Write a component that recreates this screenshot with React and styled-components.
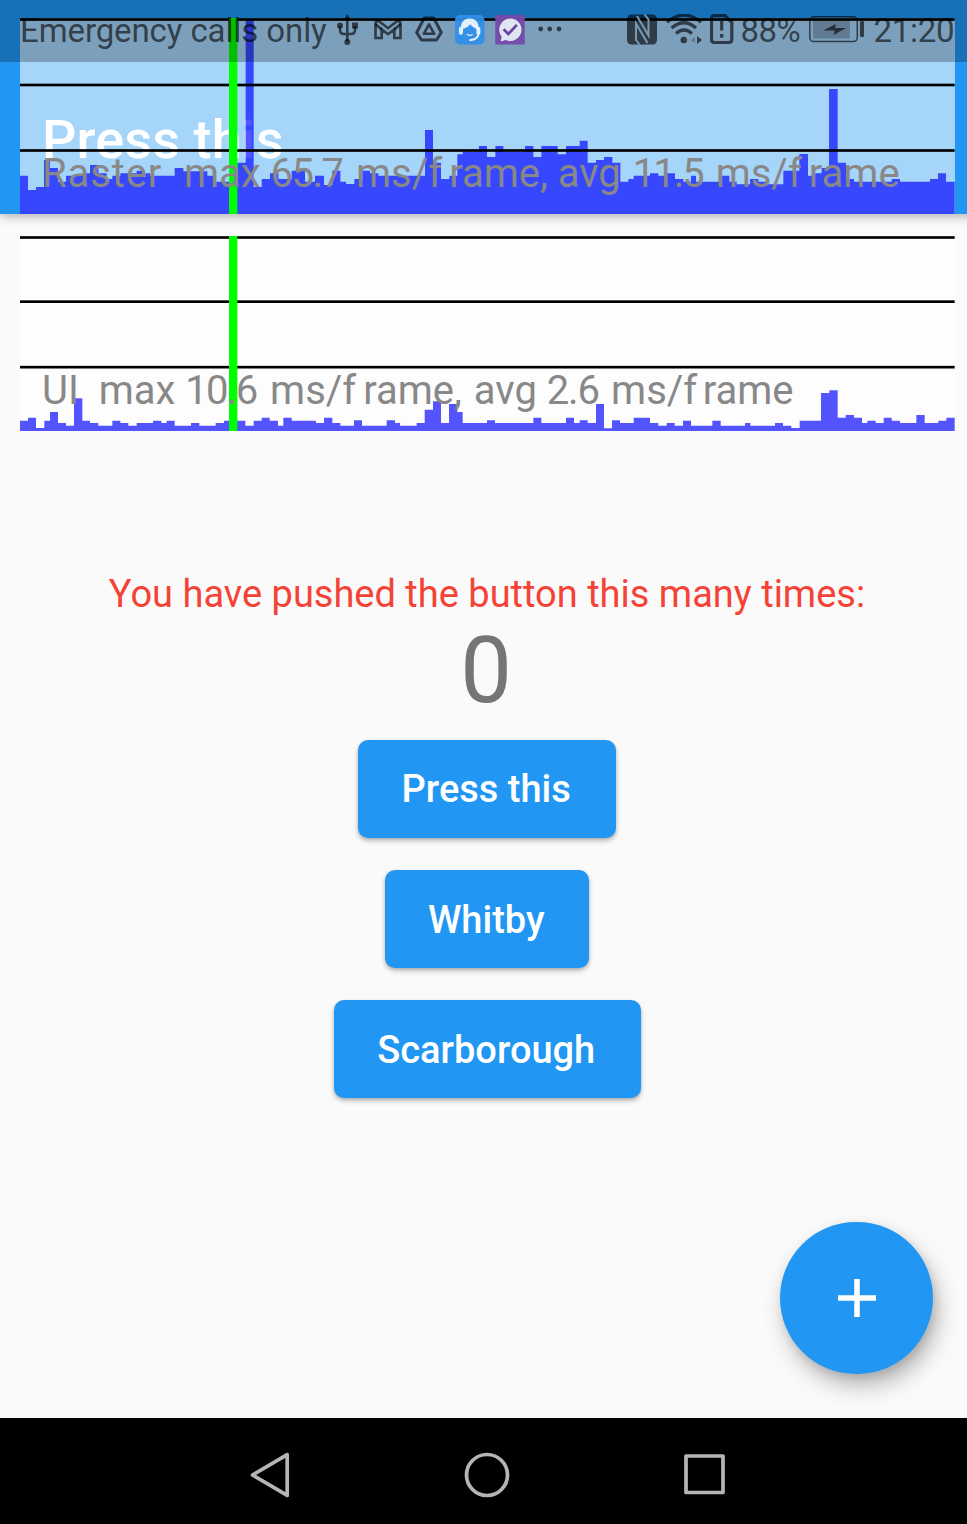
import React from "react";
import styled, { createGlobalStyle } from "styled-components";

const Global = createGlobalStyle`
  *, *::before, *::after { box-sizing: border-box; }
  html, body { margin: 0; padding: 0; background: #fafafa; }
  body { font-family: Roboto, "Liberation Sans", sans-serif; }
`;

const Viewport = styled.div`
  position: relative;
  width: 967px;
  height: 1524px;
  overflow: hidden;
`;

const Screen = styled.div`
  display: flex;
  flex-direction: column;
  width: 974px;
  height: 1524px;
  background: #fafafa;
`;

const AppBar = styled.header`
  flex: none;
  height: 214px;
  padding: 108px 43px 0 42px;
  background: #2196f3;
  box-shadow: 0 2px 10px rgba(0, 0, 0, 0.32);
`;

const Title = styled.h1`
  margin: 0;
  font-size: 54px;
  line-height: 64px;
  font-weight: 500;
  letter-spacing: 0.1px;
  color: #fff;
`;

const Main = styled.main`
  flex: 1;
  display: flex;
  flex-direction: column;
  align-items: center;
  padding-top: 357px;
`;

const Message = styled.p`
  margin: 0;
  font-size: 38px;
  line-height: 46px;
  letter-spacing: 0;
  color: #f44336;
  white-space: nowrap;
`;

const Count = styled.div`
  margin-right: 2px;
  font-size: 92px;
  line-height: 108px;
  color: #757575;
`;

const Buttons = styled.div`
  display: flex;
  flex-direction: column;
  align-items: center;
  gap: 32.3px;
  margin-top: 14.7px;
`;

const RaisedButton = styled.button`
  width: ${(p) => p.$width}px;
  height: 98px;
  padding: 1.5px 1.5px 0 0;
  border: 0;
  border-radius: 10px;
  background: #2196f3;
  color: #fff;
  font: 500 38px/44px Roboto, "Liberation Sans", sans-serif;
  letter-spacing: 0;
  box-shadow: 0 3px 5px rgba(0, 0, 0, 0.24), 0 1px 3px rgba(0, 0, 0, 0.12);
`;

const Fab = styled.button`
  position: absolute;
  left: 780.3px;
  top: 1221.5px;
  display: grid;
  place-items: center;
  width: 152.5px;
  height: 152.5px;
  padding: 0;
  border: 0;
  border-radius: 50%;
  background: #2196f3;
  box-shadow: 5px 12px 22px rgba(0, 0, 0, 0.27), 2px 4px 8px rgba(0, 0, 0, 0.1);
`;

const NavBar = styled.nav`
  flex: none;
  display: flex;
  justify-content: center;
  align-items: center;
  gap: 170px;
  height: 106px;
  padding-top: 7px;
  background: #000;
  svg { display: block; }
`;

const Overlay = styled.div`
  position: absolute;
  left: 20px;
  top: 18px;
  display: flex;
  flex-direction: column;
  gap: 22px;
`;

const ChartPanel = styled.section`
  display: grid;
  width: 934.7px;
  height: ${(p) => p.$height}px;
  background: rgba(255, 255, 255, 0.6);
  > * { grid-area: 1 / 1; }
`;

const ChartLabel = styled.div`
  align-self: end;
  padding-left: 22px;
  margin-bottom: 16px;
  font-size: 40px;
  line-height: 48px;
  color: #888;
  white-space: pre;
`;

const Spaced = styled.span`
  letter-spacing: ${(p) => p.$by}px;
`;

const StatusBar = styled.div`
  position: absolute;
  inset: 0 0 auto 0;
  display: flex;
  height: 62px;
  background: rgba(0, 0, 0, 0.25);
  color: rgba(0, 0, 0, 0.62);
  svg { display: block; }
`;

const StatusText = styled.span`
  flex: none;
  width: ${(p) => p.$width}px;
  margin: 12px 0 0 ${(p) => p.$gap}px;
  font-size: 33px;
  line-height: 38px;
  letter-spacing: ${(p) => p.$spacing || 0}px;
  white-space: nowrap;
`;

const StatusIcon = styled.span`
  flex: none;
  width: ${(p) => p.$width}px;
  margin: ${(p) => p.$top || 14}px 0 0 ${(p) => p.$gap}px;
`;

// Each pair is [right edge, top], in thirds of a pixel from the screen's corner.
const RASTER = [
  [84,527],[108,570],[132,561],[150,480],[174,504],[198,545],[255,527],[270,520],[295,495],[320,520],
  [337,537],[361,527],[410,520],[426,512],[450,520],[524,527],[550,504],[622,514],[648,527],[687,545],
  [712,520],[737,488],[761,60],[785,561],[810,537],[835,520],[875,537],[915,512],[945,545],[972,527],
  [997,555],[1021,512],[1038,545],[1063,552],[1087,537],[1110,512],[1135,520],[1275,527],[1299,390],
  [1323,488],[1348,537],[1372,527],[1388,463],[1437,455],[1461,438],[1486,471],[1510,438],[1575,455],
  [1600,438],[1624,471],[1673,438],[1698,463],[1739,438],[1763,422],[1788,488],[1812,480],[1837,471],
  [1861,488],[1885,545],[1901,537],[1950,527],[1975,520],[2000,527],[2025,520],[2050,537],[2073,545],
  [2088,527],[2165,545],[2188,527],[2210,545],[2250,553],[2275,537],[2300,545],[2350,553],[2398,512],
  [2424,462],[2440,527],[2465,520],[2487,504],[2513,267],[2538,488],[2562,537],[2675,545],[2700,537],
  [2790,545],[2814,537],[2838,520],[2864,545],
];

const UI = [
  [84,1262],[108,1253],[133,1284],[150,1262],[174,1236],[198,1269],[222,1277],[247,1195],[270,1262],
  [295,1269],[337,1277],[361,1262],[385,1269],[410,1277],[459,1269],[484,1262],[500,1269],[524,1262],
  [573,1277],[598,1269],[647,1277],[672,1269],[736,1262],[761,1277],[785,1262],[809,1253],[834,1262],
  [850,1277],[875,1253],[948,1262],[972,1269],[997,1253],[1021,1269],[1062,1277],[1086,1261],
  [1160,1277],[1185,1261],[1200,1269],[1250,1277],[1274,1269],[1299,1229],[1323,1204],[1347,1269],
  [1372,1212],[1388,1236],[1461,1269],[1485,1261],[1600,1269],[1624,1253],[1698,1269],[1722,1253],
  [1739,1269],[1763,1261],[1788,1269],[1812,1212],[1836,1285],[1860,1261],[1901,1269],[1950,1253],
  [1975,1269],[2000,1277],[2024,1269],[2049,1277],[2073,1262],[2137,1277],[2162,1262],[2235,1277],
  [2251,1269],[2325,1277],[2349,1269],[2374,1277],[2399,1284],[2463,1262],[2488,1179],[2513,1171],
  [2537,1253],[2562,1245],[2586,1253],[2602,1269],[2627,1262],[2651,1269],[2675,1253],[2700,1262],
  [2749,1269],[2774,1245],[2815,1269],[2839,1262],[2864,1253],
];

function stepPath(samples, bottom) {
  return `M60 ${bottom}` + samples.map(([x, y]) => `V${y}H${x}`).join("") + `V${bottom}Z`;
}

function FrameChart({ samples, top, bottom, lines }) {
  const height = (bottom - top) / 3;
  return (
    <svg width="934.7" height={height} viewBox={`60 ${top} 2804 ${bottom - top}`}>
      <path d={stepPath(samples, bottom)} fill="#0000ff" fillOpacity="0.667" />
      {lines.map((y) => (
        <rect key={y} x="60" y={y} width="2804" height="8" fill="#000" />
      ))}
      <rect x="687" y={top} width="25" height={bottom - top} fill="#0f0" />
    </svg>
  );
}

function Status() {
  return (
    <StatusBar>
      <StatusText $width={306} $gap={20} $spacing={-0.1}>Emergency calls only</StatusText>
      <StatusIcon $width={21} $gap={11}>
        <svg width="21" height="31" viewBox="0 0 21 31" fill="none" stroke="currentColor" strokeWidth="2.6">
          <path d="M10.3 4V27M3 12v4q0 4 4 4h7q4 0 4-4v-4" />
          <path d="M10.3 0l3.2 5H7z" fill="currentColor" stroke="none" />
          <circle cx="3" cy="11.5" r="3" fill="currentColor" stroke="none" />
          <path d="M15 8.5h6v6h-6z" fill="currentColor" stroke="none" />
          <circle cx="10.3" cy="28" r="3" fill="currentColor" stroke="none" />
        </svg>
      </StatusIcon>
      <StatusIcon $width={28} $gap={16} $top={20}>
        <svg width="28" height="20" viewBox="0 0 28 20" fill="none" stroke="currentColor" strokeWidth="2.6">
          <path d="M1.5 18V3.2Q1.5 1.2 3.5 1.2H5L14 8.2 23 1.2h1.5q2 0 2 2V18H20.3V9.4L14 14.2 7.7 9.4V18z" />
          <path d="M1.5 4.2L7.7 9.4M26.5 4.2L20.3 9.4" />
        </svg>
      </StatusIcon>
      <StatusIcon $width={28} $gap={13} $top={16}>
        <svg width="28" height="26" viewBox="0 0 28 26" fill="none" stroke="currentColor" strokeWidth="3" strokeLinejoin="round">
          <path d="M9.3 2h9.4L26.3 16.5 21.5 24H6.5L1.7 16.5z" />
          <path d="M14 8.3l5.2 9.5H8.8z" strokeWidth="2.6" />
        </svg>
      </StatusIcon>
      <StatusIcon $width={29.5} $gap={12} $top={15}>
        <svg width="29.5" height="29.5" viewBox="0 0 30 30">
          <rect width="30" height="30" rx="5" fill="#2f8fec" fillOpacity="0.93" />
          <path d="M6 12.5C6 7 10 3.6 15 3.6S24 7 24 12.5L22.5 14.5C19.5 13.5 17 11.5 15.5 9.5C13.5 12 11 13.3 8.3 14L8 18.5 6 18z" fill="#e3effa" />
          <rect x="4" y="12" width="4" height="8" rx="1.8" fill="#e3effa" />
          <rect x="21.8" y="12" width="4" height="8" rx="1.8" fill="#e3effa" />
          <path d="M24 19q-1 6-8.5 6.6" fill="none" stroke="#e3effa" strokeWidth="2.2" strokeLinecap="round" />
          <path d="M12 19.5q3 2.4 6 0" fill="none" stroke="#e3effa" strokeWidth="1.2" />
        </svg>
      </StatusIcon>
      <StatusIcon $width={30} $gap={10.5} $top={15}>
        <svg width="30" height="29.5" viewBox="0 0 30 30">
          <path d="M0 0h30v30H0z" fill="#754bab" fillOpacity="0.96" />
          <path d="M15 3.5a11.5 11.5 0 1 1-4.5 22L5.5 27l1-5A11.5 11.5 0 0 1 15 3.5z" fill="#dfe6f1" />
          <path d="M8.500 14.500l4.800 4.800 8.700-9.300" fill="none" stroke="#6845a2" strokeWidth="2.8" />
        </svg>
      </StatusIcon>
      <StatusIcon $width={24} $gap={13} $top={26}>
        <svg width="24" height="6" viewBox="0 0 24 6" fill="currentColor">
          <circle cx="2.7" cy="3" r="2.4" />
          <circle cx="11.7" cy="3" r="2.4" />
          <circle cx="21" cy="3" r="2.4" />
        </svg>
      </StatusIcon>
      <StatusIcon $width={30} $gap={65}>
        <svg width="30" height="31" viewBox="0 0 30 31">
          <rect y="0.5" width="30" height="30" rx="4.5" fill="currentColor" />
          <path d="M12.5 30.5L9 26V9.5L20.500 29M17.500 .5L21.500 5.500V21.500L10 2" fill="none" stroke="#7899b2" strokeWidth="2" />
        </svg>
      </StatusIcon>
      <StatusIcon $width={36} $gap={9}>
        <svg width="36" height="31" viewBox="0 0 36 31" fill="none" stroke="currentColor" strokeWidth="3.2">
          <path d="M1 8.2Q18 -6 35 8.2M5.5 14Q18 3.5 30 14M10 19.5Q18 12.5 26 19.5" />
          <circle cx="17.8" cy="26" r="3.3" fill="currentColor" stroke="none" />
          <path d="M31 22l5 4-5 4z" fill="currentColor" stroke="none" />
          <path d="M29 23v6l-4.5-3z" fill="currentColor" fillOpacity="0.35" stroke="none" />
        </svg>
      </StatusIcon>
      <StatusIcon $width={24} $gap={8}>
        <svg width="24" height="31" viewBox="0 0 24 31" fill="none" stroke="currentColor" strokeWidth="3.2">
          <path d="M4.5 1.6H15L21.8 8.5V25.5q0 3-3 3H4.5q-3 0-3-3V4.6q0-3 3-3z" />
          <path d="M11.7 7v9.5M11.7 20v3.8" />
        </svg>
      </StatusIcon>
      <StatusText $width={60} $gap={6.5} $spacing={-0.6}>88%</StatusText>
      <StatusIcon $width={56} $gap={8} $top={16}>
        <svg width="56" height="27" viewBox="0 0 56 27">
          <rect x="0.8" y="0.8" width="47.5" height="24.8" rx="4" fill="none" stroke="currentColor" strokeWidth="1.5" />
          <path d="M4 4h37v18.5H4z" fill="currentColor" fillOpacity="0.35" />
          <path d="M14 14.5L27 8l-1 4h11L24.5 19l1.2-4.5z" fill="currentColor" />
          <rect x="51" y="5" width="4" height="16" rx="1" fill="currentColor" />
        </svg>
      </StatusIcon>
      <StatusText $width={82} $gap={9} $spacing={-0.3}>21:20</StatusText>
    </StatusBar>
  );
}

export default function App() {
  return (
    <Viewport>
      <Global />
      <Screen>
        <AppBar>
          <Title>Press this</Title>
        </AppBar>
        <Main>
          <Message>You have pushed the button this many times:</Message>
          <Count>0</Count>
          <Buttons>
            <RaisedButton $width={258}>Press this</RaisedButton>
            <RaisedButton $width={204}>Whitby</RaisedButton>
            <RaisedButton $width={307}>Scarborough</RaisedButton>
          </Buttons>
        </Main>
        <NavBar>
          <svg width="50" height="50" viewBox="0 0 50 50" fill="none" stroke="#b5b5b5" strokeWidth="3.7" strokeLinejoin="round">
            <path d="M8.500 25L43.2 4.6v40.8z" />
          </svg>
          <svg width="46" height="46" viewBox="0 0 46 46" fill="none" stroke="#b5b5b5" strokeWidth="3.7">
            <circle cx="23" cy="23" r="20.5" />
          </svg>
          <svg width="50" height="50" viewBox="0 0 50 50" fill="none" stroke="#b5b5b5" strokeWidth="3.7" strokeLinejoin="round">
            <path d="M6 6h37v36.5H6z" />
          </svg>
        </NavBar>
      </Screen>
      <Fab aria-label="Increment">
        <svg width="40" height="40" viewBox="0 0 40 40" stroke="#fff" strokeWidth="5.5">
          <path d="M20 1v38M1 20h38" />
        </svg>
      </Fab>
      <Overlay>
        <ChartPanel $height={196}>
          <FrameChart samples={RASTER} top={54} bottom={642} lines={[54.5, 251, 447.5]} />
          <ChartLabel>
            <Spaced $by={0.9}>Raster  </Spaced>max <Spaced $by={-1.5}>65.</Spaced>7<Spaced $by={2}> </Spaced>ms/<Spaced $by={7}>f</Spaced>rame, avg<Spaced $by={2}> </Spaced><Spaced $by={-2}>11.</Spaced>5<Spaced $by={1}> </Spaced>ms/<Spaced $by={7}>f</Spaced>rame
          </ChartLabel>
        </ChartPanel>
        <ChartPanel $height={195}>
          <FrameChart samples={UI} top={708} bottom={1293} lines={[708.5, 901, 1097.5]} />
          <ChartLabel>
            UI  max <Spaced $by={-1.7}>10.</Spaced>6<Spaced $by={2}> </Spaced>ms/<Spaced $by={7}>f</Spaced>rame,<Spaced $by={2}> </Spaced>avg <Spaced $by={-1.2}>2.</Spaced>6<Spaced $by={1.2}> </Spaced>ms/<Spaced $by={5.5}>f</Spaced>rame
          </ChartLabel>
        </ChartPanel>
      </Overlay>
      <Status />
    </Viewport>
  );
}
